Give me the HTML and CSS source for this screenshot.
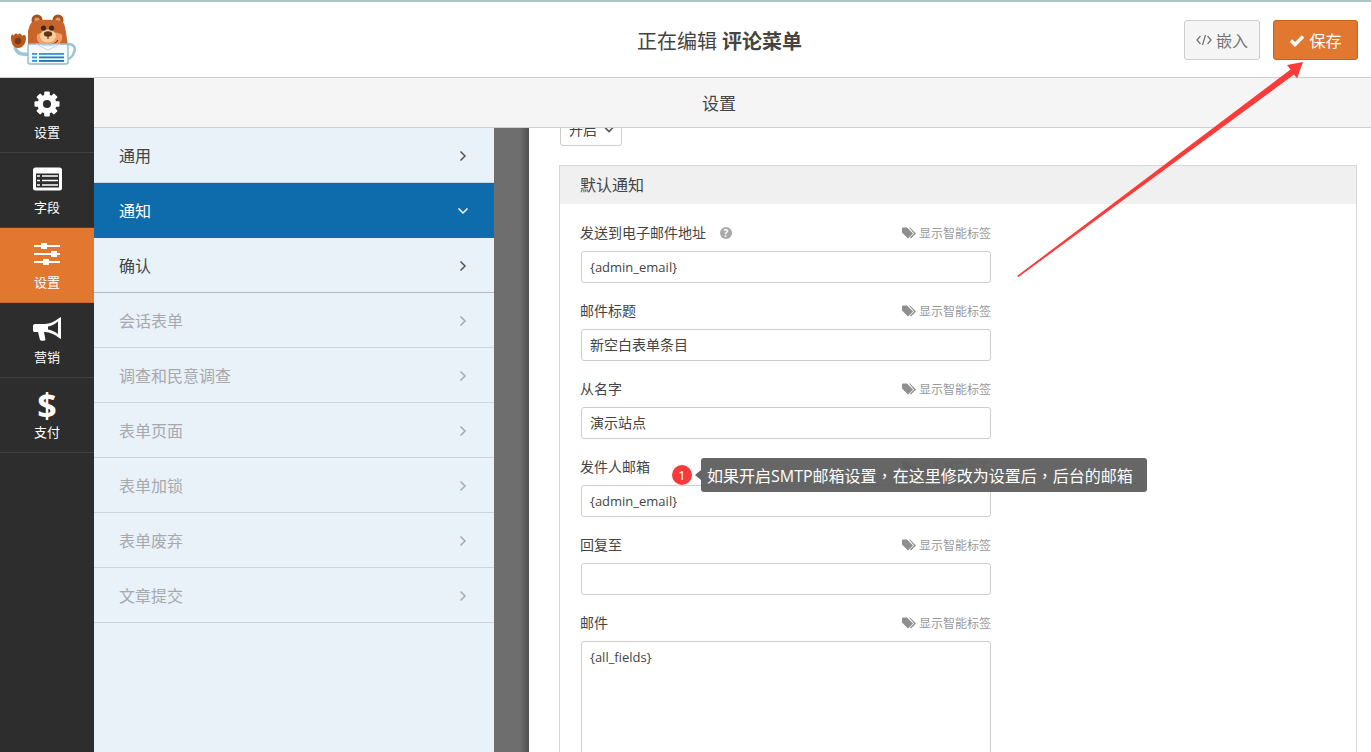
FILE: index.html
```html
<!DOCTYPE html>
<html lang="zh-CN">
<head>
    <meta charset="UTF-8">
    <title>评论菜单</title>
    <link rel="stylesheet" href="styles.css">
</head>
<body>

<div class="app">
    <header class="topbar">
        <svg class="logo" width="66" height="66" viewBox="0 0 66 66">
            <!-- arm and paw -->
            <path d="M5 40 C6 46 11 48 19 47" fill="none" stroke="#9cc6d6" stroke-width="3.4"/>
            <path d="M1 30 C1 27 3 27 4 29 C4 26 7 26 8 28 C9 26 11 26 12 29 C14 27 16 28 16 31 C16 36 13 41 8 41 C3 41 1 36 1 30 Z" fill="#b9581f"/>
            <circle cx="8" cy="34" r="3.2" fill="#7d3a14"/>
            <!-- ears and head -->
            <circle cx="27" cy="13" r="5.5" fill="#a5511f"/>
            <circle cx="48" cy="13" r="5.5" fill="#a5511f"/>
            <circle cx="27" cy="13" r="2.6" fill="#d99a6c"/>
            <circle cx="48" cy="13" r="2.6" fill="#d99a6c"/>
            <path d="M18 40 L18 24 C19 20 20 17 22 15 C27 12 48 12 53 15 C55 18 55 21 56 25 L58 40 L58 52 L18 52 Z" fill="#c9642a"/>
            <path d="M27 28 C30 24 49 24 52 28 C54 35 47 39 39 39 C32 39 25 35 27 28 Z" fill="#f0a066"/>
            <ellipse cx="38" cy="29" rx="8" ry="6.5" fill="#f6cf9e"/>
            <circle cx="33.5" cy="21" r="2.6" fill="#3b2a22"/>
            <circle cx="41.5" cy="21" r="2.6" fill="#3b2a22"/>
            <ellipse cx="38" cy="27" rx="4.2" ry="2.8" fill="#6a3316"/>
            <path d="M38 29 L38 32 M48 33 C46 36 44 37 42 37" stroke="#6a3316" stroke-width="1.2" fill="none"/>
            <!-- form body -->
            <path d="M58 37 C64 37 66 41 64 45 C63 49 61 51 58 52" fill="none" stroke="#9cc6d6" stroke-width="2.6"/>
            <rect x="18" y="37" width="40" height="20" rx="2" fill="#f4f9fb" stroke="#8fbccd" stroke-width="1.4"/>
            <path d="M26 37 L38 43 L50 37 L38 39 Z" fill="#fff" stroke="#b7d5e0" stroke-width="1"/>
            <rect x="22" y="46" width="5" height="1.8" fill="#2a9bd8"/>
            <rect x="29" y="46" width="25" height="1.8" fill="#2a9bd8"/>
            <rect x="22" y="49.5" width="5" height="1.8" fill="#2a9bd8"/>
            <rect x="29" y="49.5" width="25" height="1.8" fill="#1f7fb8"/>
            <rect x="22" y="53" width="5" height="1.8" fill="#2a9bd8"/>
            <rect x="29" y="53" width="25" height="1.8" fill="#1f6fa5"/>
        </svg>
        <div class="title">正在编辑 <strong>评论菜单</strong></div>
        <div class="actions">
            <button class="btn btn-embed">
                <svg width="16" height="12" viewBox="0 0 16 12"><path d="M4.5 2 L1 6 L4.5 10 M11.5 2 L15 6 L11.5 10 M9.5 1 L6.5 11" fill="none" stroke="#777" stroke-width="1.3"/></svg>
                嵌入
            </button>
            <button class="btn btn-save">
                <svg width="16" height="13" viewBox="0 0 16 13"><path d="M2 6.5 L6 10.5 L14 2.5" fill="none" stroke="#fff" stroke-width="3.4"/></svg>
                保存
            </button>
        </div>
    </header>

    <div class="workspace">
        <nav class="sidebar">
            <a class="side-item">
                <svg width="26" height="26" viewBox="0 0 26 26">
                    <g fill="#fff">
                        <rect x="10.2" y="0.5" width="5.6" height="25" rx="1"/>
                        <rect x="10.2" y="0.5" width="5.6" height="25" rx="1" transform="rotate(45 13 13)"/>
                        <rect x="10.2" y="0.5" width="5.6" height="25" rx="1" transform="rotate(90 13 13)"/>
                        <rect x="10.2" y="0.5" width="5.6" height="25" rx="1" transform="rotate(135 13 13)"/>
                        <circle cx="13" cy="13" r="9.5"/>
                    </g>
                    <circle cx="13" cy="13" r="4" fill="#2d2d2d"/>
                </svg>
                <span>设置</span>
            </a>
            <a class="side-item">
                <svg width="29" height="23" viewBox="0 0 29 23">
                    <rect width="29" height="23" rx="2.5" fill="#fff"/>
                    <rect x="3" y="6" width="23" height="14" fill="#2d2d2d"/>
                    <path d="M4 8.5 H7 M9 8.5 H25 M4 13 H7 M9 13 H25 M4 17.5 H7 M9 17.5 H25" stroke="#fff" stroke-width="1.7"/>
                </svg>
                <span>字段</span>
            </a>
            <a class="side-item active">
                <svg width="26" height="24" viewBox="0 0 26 24">
                    <path d="M0 4 H26 M0 12 H26 M0 20 H26" stroke="#fff" stroke-width="1.8"/>
                    <rect x="7" y="1" width="6" height="6" fill="#fff"/>
                    <rect x="17" y="9" width="6" height="6" fill="#fff"/>
                    <rect x="9" y="17" width="6" height="6" fill="#fff"/>
                </svg>
                <span>设置</span>
            </a>
            <a class="side-item">
                <svg width="29" height="24" viewBox="0 0 29 24">
                    <path d="M28 0 L25.5 1.5 C21 5 17 6.5 12 7 L2 7 C0.5 7 0 8 0 9 L0 13 C0 14.5 0.5 15 2 15 L5 15 L7 23 C7.5 24 12 24 12.5 23 L11 15 L12 15 C17 15.5 21.5 17 25.5 20.5 L28 22 Z M25 4.5 L25 17 C21.5 14.5 18 13 15 12.5 L15 9.5 C18 9 21.5 7.5 25 4.5 Z" fill="#fff" fill-rule="evenodd"/>
                </svg>
                <span>营销</span>
            </a>
            <a class="side-item">
                <b class="dollar">$</b>
                <span>支付</span>
            </a>
        </nav>

        <div class="builder">
            <div class="section-title">设置</div>
            <div class="builder-body">
                <ul class="menu">
                    <li>通用<svg class="chev" width="8" height="12" viewBox="0 0 8 12"><path d="M1.5 1.5 L6 6 L1.5 10.5" /></svg></li>
                    <li class="current">通知<svg class="chev" width="12" height="8" viewBox="0 0 12 8"><path d="M1.5 1.5 L6 6 L10.5 1.5" /></svg></li>
                    <li class="last-core">确认<svg class="chev" width="8" height="12" viewBox="0 0 8 12"><path d="M1.5 1.5 L6 6 L1.5 10.5" /></svg></li>
                    <li class="off">会话表单<svg class="chev" width="8" height="12" viewBox="0 0 8 12"><path d="M1.5 1.5 L6 6 L1.5 10.5" /></svg></li>
                    <li class="off">调查和民意调查<svg class="chev" width="8" height="12" viewBox="0 0 8 12"><path d="M1.5 1.5 L6 6 L1.5 10.5" /></svg></li>
                    <li class="off">表单页面<svg class="chev" width="8" height="12" viewBox="0 0 8 12"><path d="M1.5 1.5 L6 6 L1.5 10.5" /></svg></li>
                    <li class="off">表单加锁<svg class="chev" width="8" height="12" viewBox="0 0 8 12"><path d="M1.5 1.5 L6 6 L1.5 10.5" /></svg></li>
                    <li class="off">表单废弃<svg class="chev" width="8" height="12" viewBox="0 0 8 12"><path d="M1.5 1.5 L6 6 L1.5 10.5" /></svg></li>
                    <li class="off">文章提交<svg class="chev" width="8" height="12" viewBox="0 0 8 12"><path d="M1.5 1.5 L6 6 L1.5 10.5" /></svg></li>
                </ul>
                <div class="gutter"></div>
                <main class="content">
                    <div class="select">开启<svg width="12" height="8" viewBox="0 0 12 8"><path d="M1 1.5 L6 6.5 L11 1.5" fill="none" stroke="#555" stroke-width="1.6"/></svg></div>

                    <section class="panel">
                        <div class="panel-head">默认通知</div>
                        <div class="panel-body">
                            <div class="field">
                                <div class="field-top">
                                    <label>发送到电子邮件地址<i class="help">?</i></label>
                                    <a class="smart"><svg class="tag" width="14" height="12" viewBox="0 0 14 12"><path d="M0 1 L0 5.5 L6 11.5 L11 6.5 L5 0.5 L0.5 0.5 Z M8 0.5 L14 6.5 L9 11.5 L8 10.5 L12 6.5 L7 0.5 Z" fill-rule="evenodd"/></svg>显示智能标签</a>
                                </div>
                                <div class="input">{admin_email}</div>
                            </div>
                            <div class="field">
                                <div class="field-top">
                                    <label>邮件标题</label>
                                    <a class="smart"><svg class="tag" width="14" height="12" viewBox="0 0 14 12"><path d="M0 1 L0 5.5 L6 11.5 L11 6.5 L5 0.5 L0.5 0.5 Z M8 0.5 L14 6.5 L9 11.5 L8 10.5 L12 6.5 L7 0.5 Z" fill-rule="evenodd"/></svg>显示智能标签</a>
                                </div>
                                <div class="input cn">新空白表单条目</div>
                            </div>
                            <div class="field">
                                <div class="field-top">
                                    <label>从名字</label>
                                    <a class="smart"><svg class="tag" width="14" height="12" viewBox="0 0 14 12"><path d="M0 1 L0 5.5 L6 11.5 L11 6.5 L5 0.5 L0.5 0.5 Z M8 0.5 L14 6.5 L9 11.5 L8 10.5 L12 6.5 L7 0.5 Z" fill-rule="evenodd"/></svg>显示智能标签</a>
                                </div>
                                <div class="input cn">演示站点</div>
                            </div>
                            <div class="field">
                                <div class="field-top">
                                    <label>发件人邮箱</label>
                                    <a class="smart"><svg class="tag" width="14" height="12" viewBox="0 0 14 12"><path d="M0 1 L0 5.5 L6 11.5 L11 6.5 L5 0.5 L0.5 0.5 Z M8 0.5 L14 6.5 L9 11.5 L8 10.5 L12 6.5 L7 0.5 Z" fill-rule="evenodd"/></svg>显示智能标签</a>
                                </div>
                                <div class="input">{admin_email}</div>
                            </div>
                            <div class="field">
                                <div class="field-top">
                                    <label>回复至</label>
                                    <a class="smart"><svg class="tag" width="14" height="12" viewBox="0 0 14 12"><path d="M0 1 L0 5.5 L6 11.5 L11 6.5 L5 0.5 L0.5 0.5 Z M8 0.5 L14 6.5 L9 11.5 L8 10.5 L12 6.5 L7 0.5 Z" fill-rule="evenodd"/></svg>显示智能标签</a>
                                </div>
                                <div class="input"></div>
                            </div>
                            <div class="field">
                                <div class="field-top">
                                    <label>邮件</label>
                                    <a class="smart"><svg class="tag" width="14" height="12" viewBox="0 0 14 12"><path d="M0 1 L0 5.5 L6 11.5 L11 6.5 L5 0.5 L0.5 0.5 Z M8 0.5 L14 6.5 L9 11.5 L8 10.5 L12 6.5 L7 0.5 Z" fill-rule="evenodd"/></svg>显示智能标签</a>
                                </div>
                                <div class="input textarea">{all_fields}</div>
                            </div>
                        </div>
                    </section>
                </main>
            </div>
        </div>
    </div>

    <!-- annotations on top of the screenshot -->
    <div class="note">
        <span class="note-num">1</span>
        <span class="note-text">如果开启SMTP邮箱设置<span class="comma" lang="zh-TW">，</span>在这里修改为设置后<span class="comma" lang="zh-TW">，</span>后台的邮箱</span>
    </div>
    <svg class="red-arrow" width="1371" height="752" viewBox="0 0 1371 752">
        <polygon points="1017,276 1018.5,277 1294,74.5 1297,78.5 1303,62 1287,65 1290.5,69.5" fill="#fb3a3a"/>
    </svg>
</div>

</body>
</html>
```
FILE: styles.css
```css
* {
    box-sizing: border-box;
}
html, body {
    margin: 0;
    height: 100%;
    overflow: hidden;
}
body {
    font-family: "Open Sans", "Noto Sans CJK SC", sans-serif;
    font-size: 14px;
    color: #444;
    background: #fff;
}
.app {
    position: relative;
    height: 752px;
    display: flex;
    flex-direction: column;
    overflow: hidden;
    border-top: 2px solid #a9c5c6;
}

/* top bar */
.topbar {
    height: 76px;
    flex: none;
    display: flex;
    align-items: center;
    justify-content: space-between;
    padding: 0 13px 0 10px;
    background: #fff;
    border-bottom: 1px solid #cfcfcf;
    position: relative;
}
.logo {
    display: block;
}
.title {
    position: absolute;
    left: 68px;
    right: 0;
    top: 0;
    height: 75px;
    line-height: 79px;
    text-align: center;
    font-size: 20px;
    color: #444;
}
.title strong {
    font-weight: 700;
}
.actions {
    display: flex;
    gap: 13px;
    margin-top: 1px;
    position: relative;
}
.btn {
    height: 40px;
    border-radius: 3px;
    font-family: inherit;
    font-size: 16px;
    display: flex;
    align-items: center;
    justify-content: center;
    gap: 4px;
    padding: 0;
}
.btn-embed {
    width: 76px;
    background: #f5f5f5;
    border: 1px solid #cccccc;
    color: #777;
}
.btn-save {
    width: 85px;
    background: #e27730;
    border: 1px solid #c1621f;
    color: #fff;
}

/* left icons */
.workspace {
    flex: 1;
    display: flex;
    min-height: 0;
}
.sidebar {
    width: 94px;
    flex: none;
    background: #2d2d2d;
}
.side-item {
    height: 75px;
    display: flex;
    flex-direction: column;
    align-items: center;
    justify-content: flex-start;
    padding-top: 13px;
    border-bottom: 1px solid #404040;
    color: #fff;
    font-size: 13px;
    position: relative;
}
.side-item svg {
    height: 26px;
    display: block;
}
.side-item span {
    position: absolute;
    top: 45px;
    line-height: 18px;
}
.side-item.active {
    background: #e27730;
    border-bottom-color: #c9682a;
}
.dollar {
    font-family: "Open Sans", sans-serif;
    font-size: 34px;
    line-height: 28px;
    font-weight: 700;
}

/* builder area */
.builder {
    flex: 1;
    min-width: 0;
    display: flex;
    flex-direction: column;
}
.section-title {
    height: 50px;
    flex: none;
    line-height: 51px;
    text-align: center;
    font-size: 17px;
    padding-right: 27px;
    background: #f5f5f5;
    border-bottom: 1px solid #cfcfcf;
    color: #444;
}
.builder-body {
    flex: 1;
    min-height: 0;
    display: flex;
}
.menu {
    width: 400px;
    flex: none;
    margin: 0;
    padding: 0;
    list-style: none;
    background: #e9f1f9;
}
.menu li {
    height: 55px;
    display: flex;
    align-items: center;
    justify-content: space-between;
    padding: 0 27px 1px 25px;
    font-size: 16px;
    color: #444;
    border-bottom: 1px solid #ccd6e0;
}
.chev {
    fill: none;
    stroke: #555;
    stroke-width: 1.5;
    margin-top: 3px;
}
.menu li.current {
    background: #0e6cad;
    color: #fff;
    border-bottom-color: #0e6cad;
}
.menu li.current .chev {
    stroke: #fff;
    margin-right: -2px;
}
.menu li.last-core {
    border-bottom-color: #b3bdc9;
}
.menu li.off {
    color: #a7a9ad;
}
.menu li.off .chev {
    stroke: #a7a9ad;
}
.gutter {
    width: 35px;
    flex: none;
    background: linear-gradient(to right, #6e6e6e 75%, #4f4f4f);
}
.content {
    flex: 1;
    min-width: 0;
    padding: 0 14px 0 30px;
    overflow: hidden;
    background: #fff;
}
.select {
    width: 62px;
    height: 32px;
    margin: -14px 0 0 1px;
    padding: 0 0 2px 8px;
    display: flex;
    align-items: center;
    gap: 6px;
    border: 1px solid #ccc;
    border-radius: 3px;
    font-size: 14px;
    color: #444;
}
.panel {
    margin-top: 19px;
    border: 1px solid #d6d6d6;
    border-bottom: none;
}
.panel-head {
    height: 38px;
    line-height: 39px;
    padding-left: 20px;
    font-size: 16px;
    background: #f0f0f0;
}
.panel-body {
    padding: 19px 20px 0 21px;
    width: 451px;
}
.field {
    margin-bottom: 18px;
}
.field-top {
    height: 20px;
    margin-bottom: 8px;
    display: flex;
    align-items: center;
    justify-content: space-between;
    margin-left: -1px;
}
.field-top label {
    display: flex;
    align-items: center;
    font-size: 14px;
    line-height: 18px;
    padding-bottom: 1px;
    color: #444;
}
.help {
    width: 12px;
    height: 12px;
    margin-left: 14px;
    border-radius: 50%;
    background: #a9a9a9;
    color: #fff;
    font-style: normal;
    font-size: 10px;
    font-weight: 700;
    line-height: 12px;
    text-align: center;
}
.smart {
    display: flex;
    align-items: center;
    gap: 3px;
    font-size: 12px;
    color: #999;
}
.tag {
    fill: #8f8f8f;
}
.input {
    height: 32px;
    line-height: 30px;
    padding: 0 8px;
    border: 1px solid #ccc;
    border-radius: 3px;
    font-size: 13px;
    color: #444;
    background: #fff;
}
.input.cn {
    font-size: 14px;
}
.textarea {
    height: 200px;
    line-height: 18px;
    padding-top: 6px;
}

/* annotations */
.note {
    position: absolute;
    left: 672px;
    top: 456px;
    display: flex;
    align-items: center;
}
.note-num {
    width: 20px;
    height: 20px;
    border-radius: 50%;
    background: #f83a3a;
    color: #fff;
    font-size: 13px;
    line-height: 20px;
    text-align: center;
}
.note-text {
    position: relative;
    margin-left: 9px;
    height: 34px;
    width: 446px;
    line-height: 34px;
    padding-left: 6px;
    border-radius: 3px;
    background: rgba(92, 92, 92, 0.94);
    color: #fff;
    font-size: 16px;
    white-space: nowrap;
}
.note-text::before {
    content: "";
    position: absolute;
    left: -6px;
    top: 12px;
    border-style: solid;
    border-width: 5px 6px 5px 0;
    border-color: transparent rgba(92, 92, 92, 0.94) transparent transparent;
}
.comma {
    font-family: "Noto Sans CJK TC", sans-serif;
}
.red-arrow {
    position: absolute;
    left: 0;
    top: -2px;
    pointer-events: none;
}
```
